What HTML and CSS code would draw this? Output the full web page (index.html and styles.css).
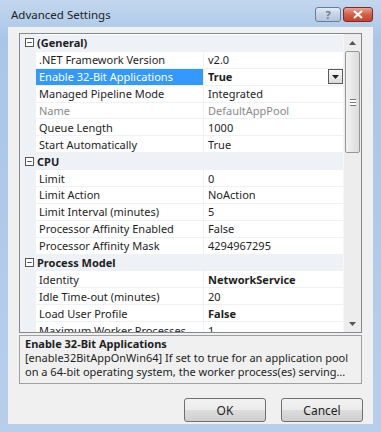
FILE: index.html
```html
<!DOCTYPE html>
<html lang="en">
  <head>
    <meta charset="UTF-8" />
    <title>Advanced Settings</title>
    <link rel="stylesheet" href="styles.css">
  </head>
  <body>
    <div class="window">
      <div class="titlebar">
        <span class="title">Advanced Settings</span>
        <div class="caption-buttons">
          <span class="cap-btn help">?</span>
          <span class="cap-btn close">
            <svg width="12" height="9" viewBox="0 0 12 9"><path d="M2 1 L10 8 M10 1 L2 8" stroke="#fff" stroke-width="2.2"/></svg>
          </span>
        </div>
      </div>
      <div class="client">
        <div class="grid">
          <div class="rows">
            <div class="row cat"><span class="toggle">−</span><span class="name">(General)</span></div>
            <div class="row"><span class="name">.NET Framework Version</span><span class="value">v2.0</span></div>
            <div class="row selected"><span class="name">Enable 32-Bit Applications</span><span class="value bold">True<span class="drop"><svg width="7" height="4" viewBox="0 0 7 4"><path d="M0 0 H7 L3.5 4 Z" fill="#222"/></svg></span></span></div>
            <div class="row"><span class="name">Managed Pipeline Mode</span><span class="value">Integrated</span></div>
            <div class="row readonly"><span class="name">Name</span><span class="value">DefaultAppPool</span></div>
            <div class="row"><span class="name">Queue Length</span><span class="value">1000</span></div>
            <div class="row"><span class="name">Start Automatically</span><span class="value">True</span></div>
            <div class="row cat"><span class="toggle">−</span><span class="name">CPU</span></div>
            <div class="row"><span class="name">Limit</span><span class="value">0</span></div>
            <div class="row"><span class="name">Limit Action</span><span class="value">NoAction</span></div>
            <div class="row"><span class="name">Limit Interval (minutes)</span><span class="value">5</span></div>
            <div class="row"><span class="name">Processor Affinity Enabled</span><span class="value">False</span></div>
            <div class="row"><span class="name">Processor Affinity Mask</span><span class="value">4294967295</span></div>
            <div class="row cat"><span class="toggle">−</span><span class="name">Process Model</span></div>
            <div class="row"><span class="name">Identity</span><span class="value bold">NetworkService</span></div>
            <div class="row"><span class="name">Idle Time-out (minutes)</span><span class="value">20</span></div>
            <div class="row"><span class="name">Load User Profile</span><span class="value bold">False</span></div>
            <div class="row"><span class="name">Maximum Worker Processes</span><span class="value">1</span></div>
          </div>
          <div class="scrollbar">
            <div class="arrow"><svg width="7" height="4" viewBox="0 0 7 4"><path d="M0 4 H7 L3.5 0 Z" fill="#555"/></svg></div>
            <div class="thumb"><span class="grip"></span></div>
            <div class="track"></div>
            <div class="arrow"><svg width="7" height="4" viewBox="0 0 7 4"><path d="M0 0 H7 L3.5 4 Z" fill="#555"/></svg></div>
          </div>
        </div>
        <div class="desc">
          <div class="desc-title">Enable 32-Bit Applications</div>
          <div class="desc-text">[enable32BitAppOnWin64] If set to true for an application pool on a 64-bit operating system, the worker process(es) serving this application pool will run in WOW64 mode.</div>
        </div>
        <div class="buttons">
          <button type="button">OK</button>
          <button type="button">Cancel</button>
        </div>
      </div>
    </div>
  </body>
</html>
```

FILE: styles.css
```css
body {
  margin: 0;
  font-family: "Noto Sans", "Open Sans", sans-serif;
  font-size: 11px;
  color: #1e1e1e;
}
.window {
  width: 381px;
  height: 432px;
  background: linear-gradient(#c3d7ee, #a9c6e8 40px, #b7cfeb);
  display: flex;
  flex-direction: column;
  box-sizing: border-box;
}
.titlebar {
  height: 27px;
  display: flex;
  justify-content: space-between;
  align-items: flex-start;
  padding: 0 8px 0 11px;
}
.title {
  font-size: 11.5px;
  margin-top: 7px;
  color: #222;
}
.caption-buttons {
  display: flex;
  gap: 2px;
  margin-top: 7px;
}
.cap-btn {
  height: 13px;
  border: 1px solid #6a7c96;
  border-radius: 3px;
  display: flex;
  align-items: center;
  justify-content: center;
  font-size: 11px;
  font-weight: bold;
}
.help {
  width: 24px;
  color: #6f7d90;
  background: linear-gradient(#e2ebf5, #c4d3e5 50%, #b4c6dc);
}
.close {
  width: 28px;
  border-color: #7a2e24;
  background: linear-gradient(#e8a493, #d25f46 50%, #c4432b);
}
.client {
  flex: 1;
  margin: 0 8px 8px;
  background: #f0f0f0;
  padding: 6px 11px 0 11px;
  display: flex;
  flex-direction: column;
}
.grid {
  height: 300px;
  border: 1px solid #828790;
  background: #fff;
  display: flex;
  box-sizing: border-box;
}
.rows {
  flex: 1;
  overflow: hidden;
  padding-top: 1px;
  background: linear-gradient(90deg, #eef1f6 16px, #fff 16px);
}
.row {
  height: 16.9px;
  flex-shrink: 0;
  display: flex;
  align-items: center;
  box-sizing: border-box;
  border-bottom: 1px solid #eef1f6;
}
.row .name {
  width: 168px;
  margin-left: 16px;
  padding-left: 3px;
  height: 100%;
  display: flex;
  align-items: center;
  box-sizing: border-box;
  border-right: 1px solid #eef1f6;
  white-space: nowrap;
  overflow: hidden;
}
.row .value {
  flex: 1;
  padding-left: 4px;
  display: flex;
  align-items: center;
  justify-content: space-between;
}
.bold {
  font-weight: bold;
}
.cat {
  background: #eef1f6;
  font-weight: bold;
}
.cat .name {
  margin-left: 0;
  border-right: none;
}
.toggle {
  width: 7px;
  height: 7px;
  margin-left: 5px;
  border: 1px solid #555;
  font-size: 10px;
  line-height: 6px;
  text-align: center;
  font-weight: normal;
  background: #fff;
}
.selected .name {
  background: #3399ff;
  color: #fff;
}
.readonly {
  color: #8a8a8a;
}
.drop {
  width: 13px;
  height: 13px;
  border: 1px solid #5a5a5a;
  background: linear-gradient(#fafafa, #dcdcdc);
  display: flex;
  align-items: center;
  justify-content: center;
}
.scrollbar {
  width: 17px;
  display: flex;
  flex-direction: column;
  background: #ededed;
  border-left: 1px solid #f6f6f6;
}
.arrow {
  height: 17px;
  display: flex;
  align-items: center;
  justify-content: center;
}
.thumb {
  height: 100px;
  margin: 0 1px;
  border: 1px solid #979797;
  border-radius: 2px;
  background: linear-gradient(90deg, #f2f2f2, #dcdcdc);
  display: flex;
  align-items: center;
  justify-content: center;
}
.grip {
  width: 6px;
  height: 5px;
  border-top: 1px solid #777;
  border-bottom: 1px solid #777;
  background: linear-gradient(#fff 2px, #777 2px, #777 3px, #fff 3px);
}
.track {
  flex: 1;
}
.desc {
  margin-top: 2px;
  height: 49px;
  border: 1px solid #a0a0a0;
  box-sizing: border-box;
  padding: 1px 5px 0 5px;
  line-height: 14px;
}
.desc-title {
  font-weight: bold;
}
.desc-text {
  display: -webkit-box;
  -webkit-line-clamp: 2;
  -webkit-box-orient: vertical;
  overflow: hidden;
}
.buttons {
  display: flex;
  justify-content: flex-end;
  gap: 15px;
  margin-top: 14px;
  margin-right: -1px;
}
.buttons button {
  width: 82px;
  height: 24px;
  border: 1px solid #707070;
  border-radius: 3px;
  background: linear-gradient(#f2f2f2, #ebebeb 50%, #dddddd 50%, #cfcfcf);
  font-family: inherit;
  font-size: 12px;
  color: #1e1e1e;
}
```
